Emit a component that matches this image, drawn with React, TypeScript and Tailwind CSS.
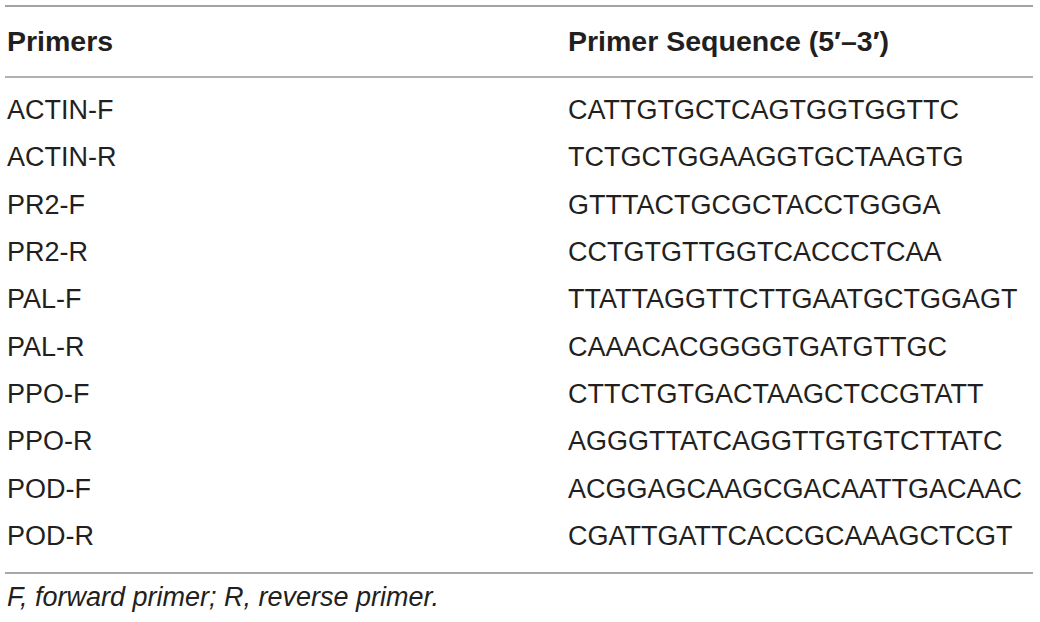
const rows: [string, string][] = [
  ['ACTIN-F', 'CATTGTGCTCAGTGGTGGTTC'],
  ['ACTIN-R', 'TCTGCTGGAAGGTGCTAAGTG'],
  ['PR2-F', 'GTTTACTGCGCTACCTGGGA'],
  ['PR2-R', 'CCTGTGTTGGTCACCCTCAA'],
  ['PAL-F', 'TTATTAGGTTCTTGAATGCTGGAGT'],
  ['PAL-R', 'CAAACACGGGGTGATGTTGC'],
  ['PPO-F', 'CTTCTGTGACTAAGCTCCGTATT'],
  ['PPO-R', 'AGGGTTATCAGGTTGTGTCTTATC'],
  ['POD-F', 'ACGGAGCAAGCGACAATTGACAAC'],
  ['POD-R', 'CGATTGATTCACCGCAAAGCTCGT'],
];

const App = () => {
  return (
    <div className="w-[1040px] h-[622px] bg-white pt-[5px] pl-[5px] pr-[7px] font-['Liberation_Sans',Arial,sans-serif] text-[#231f20]">
      <div className="border-t-2 border-[#a3a3a3]">
        {/* Header */}
        <div className="grid grid-cols-[561px_1fr] h-[69px] items-center pl-[2px] text-[28.5px] font-bold leading-none">
          <span>Primers</span>
          <span>Primer Sequence (5′–3′)</span>
        </div>

        {/* Body */}
        <div className="border-t-2 border-[#b0b0b0] pt-[9px] pb-[12px]">
          {rows.map(([name, seq]) => (
            <div
              key={name}
              className="grid grid-cols-[561px_1fr] h-[47.33px] items-center pl-[2px] text-[27px] leading-none"
            >
              <span>{name}</span>
              <span>{seq}</span>
            </div>
          ))}
        </div>

        {/* Footnote */}
        <div className="border-t-2 border-[#a8a8a8] h-[49px] flex items-center pl-[2px] text-[27px] italic leading-none">
          F, forward primer; R, reverse primer.
        </div>
      </div>
    </div>
  );
};

export default App;
